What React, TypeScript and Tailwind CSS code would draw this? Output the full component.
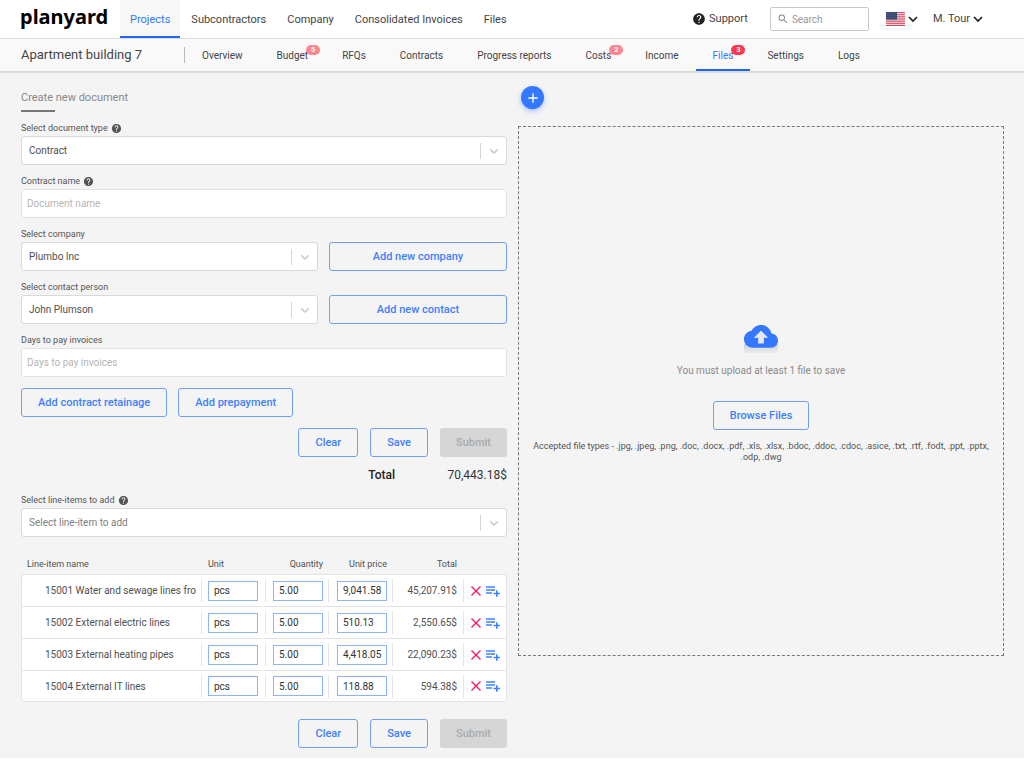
import { useState } from 'react';
import type { ReactNode } from 'react';
import { MdAdd, MdHelp, MdSearch } from 'react-icons/md';

const mainLinks = ['Projects', 'Subcontractors', 'Company', 'Consolidated Invoices', 'Files'];

const projectTabs = [
    { name: 'Overview' },
    { name: 'Budget', count: 5 },
    { name: 'RFQs' },
    { name: 'Contracts' },
    { name: 'Progress reports' },
    { name: 'Costs', count: 2 },
    { name: 'Income' },
    { name: 'Files', count: 3 },
    { name: 'Settings' },
    { name: 'Logs' },
];

const lineItems = [
    { name: '15001 Water and sewage lines from', unit: 'pcs', quantity: '5.00', price: '9,041.58', total: '45,207.91$' },
    { name: '15002 External electric lines', unit: 'pcs', quantity: '5.00', price: '510.13', total: '2,550.65$' },
    { name: '15003 External heating pipes', unit: 'pcs', quantity: '5.00', price: '4,418.05', total: '22,090.23$' },
    { name: '15004 External IT lines', unit: 'pcs', quantity: '5.00', price: '118.88', total: '594.38$' },
];

function Chevron({ className }: { className: string }) {
    return (
        <svg viewBox="0 0 20 20" fill="currentColor" className={className} aria-hidden="true">
            <path d="M4.516 7.548c0.436-0.446 1.043-0.481 1.576 0l3.908 3.747 3.908-3.747c0.533-0.481 1.141-0.446 1.574 0 0.436 0.445 0.408 1.197 0 1.615-0.406 0.418-4.695 4.502-4.695 4.502-0.217 0.223-0.502 0.335-0.787 0.335s-0.57-0.112-0.789-0.335c0 0-4.287-4.084-4.695-4.502s-0.436-1.17 0-1.615z" />
        </svg>
    );
}

function CaretDown() {
    return (
        <svg viewBox="0 0 10 10" fill="none" stroke="#222" strokeWidth="1.7" className="size-[10px]" aria-hidden="true">
            <path d="M1 3l4 4 4-4" />
        </svg>
    );
}

function Cross() {
    return (
        <svg viewBox="0 0 10 10" fill="none" stroke="#f5185c" strokeWidth="1.4" className="size-[10px]" aria-hidden="true">
            <path d="M0.5 0.5l9 9M9.5 0.5l-9 9" />
        </svg>
    );
}

function ListPlus() {
    return (
        <svg viewBox="0 0 16 12" fill="none" stroke="#4080ff" strokeWidth="1.6" className="h-3 w-4" aria-hidden="true">
            <path d="M1 2h9M1 5h9M1 8h6M8.5 8.5h6.5M11.8 5.2v6.6" />
        </svg>
    );
}

function Flag() {
    return (
        <svg viewBox="0 0 19 14" className="h-[14px] w-[19px]" aria-hidden="true">
            <rect width="19" height="14" fill="#f3e4e6" />
            {[0, 2, 4, 6, 8, 10, 12].map((y) => (
                <rect key={y} y={y * 1.077} width="19" height="1.077" fill="#d0475a" />
            ))}
            <rect width="11" height="7.5" fill="#3c4a78" />
            {[1.2, 3.2, 5.2].map((y) =>
                [1.2, 3.4, 5.6, 7.8].map((x) => <rect key={`${x}-${y}`} x={x} y={y} width="0.7" height="0.7" fill="#6f7ba3" />)
            )}
        </svg>
    );
}

function FieldLabel({ id, text, help }: { id: string; text: string; help?: boolean }) {
    return (
        <label htmlFor={id} className="flex h-4 items-center gap-[3px] pt-px text-[9px] text-[#555]">
            {text}
            {help && <MdHelp className="size-[11px] text-[#555]" />}
        </label>
    );
}

function SelectBox({ id, value, muted }: { id: string; value: string; muted?: boolean }) {
    return (
        <div className="relative">
            <select
                id={id}
                className={`block h-[29px] w-full appearance-none rounded-[3px] border border-[#d9d9d9] bg-white pr-8 pl-[7px] text-[10px] outline-none ${muted ? 'text-[#808080]' : 'text-[#505050]'}`}
            >
                <option>{value}</option>
            </select>
            <div className="pointer-events-none absolute inset-y-0 right-0 flex items-center text-[#ccc]">
                <span className="h-4 w-px bg-[#d5d5d5]" />
                <Chevron className="mx-[6px] size-[14px]" />
            </div>
        </div>
    );
}

function TextBox({ id, placeholder }: { id: string; placeholder: string }) {
    return (
        <input
            id={id}
            type="text"
            placeholder={placeholder}
            className="block h-[29px] w-full rounded-[3px] border border-[#e2e2e2] bg-white px-[5px] text-[10px] text-[#505050] outline-none placeholder:text-[#b5b5b5]"
        />
    );
}

function OutlineButton({ children }: { children: ReactNode }) {
    return (
        <button type="button" className="h-[29px] cursor-pointer rounded-[3px] border border-[#6f9ffb] px-4 pt-px text-[11px] font-medium text-[#4080ff]">
            {children}
        </button>
    );
}

function FormActions() {
    return (
        <div className="flex justify-end gap-3">
            <OutlineButton>Clear</OutlineButton>
            <OutlineButton>Save</OutlineButton>
            <button type="button" disabled className="h-[29px] rounded-[3px] bg-[#d6d6d6] px-4 pt-px text-[11px] font-medium text-[#aaa]">
                Submit
            </button>
        </div>
    );
}

function TopBar() {
    return (
        <header className="flex h-[39px] items-stretch border-b border-[#ddd] bg-white text-[11px] text-[#444]">
            <a href="#" className="flex w-[120px] shrink-0 items-center pb-1 pl-5 font-['Noto_Sans',sans-serif] text-[20px] leading-none font-bold text-black">
                planyard
            </a>
            <nav className="flex gap-px">
                {mainLinks.map((link) => (
                    <a
                        key={link}
                        href="#"
                        className={`flex items-center px-[10px] whitespace-nowrap ${link === 'Projects' ? 'border-b-2 border-[#2065f8] bg-[#f8f8f8] pt-1 text-[#3478ff]' : 'pt-0.5'}`}
                    >
                        {link}
                    </a>
                ))}
            </nav>
            <div className="ml-auto flex items-center pr-[41px]">
                <a href="#" className="flex items-center gap-[3px]">
                    <MdHelp className="size-[14px] text-[#222]" />
                    Support
                </a>
                <label className="ml-[22px] flex h-6 w-[99px] items-center gap-[3px] rounded-[2px] border border-[#c8c8c8] px-[6px]">
                    <MdSearch className="size-3 shrink-0 text-[#888]" />
                    <input type="search" aria-label="Search" placeholder="Search" className="w-full min-w-0 text-[10px] outline-none placeholder:text-[#999]" />
                </label>
                <button type="button" aria-label="Language" className="ml-[17px] flex items-center gap-[3px]">
                    <Flag />
                    <CaretDown />
                </button>
                <button type="button" className="ml-[15px] flex items-center gap-[3px]">
                    M. Tour
                    <CaretDown />
                </button>
            </div>
        </header>
    );
}

function ProjectBar() {
    return (
        <div className="flex h-[33px] items-stretch border-b border-[#d9d9d9] bg-[#f9f9f9] text-[#444] shadow-[0_1px_1px_#ddd]">
            <div className="flex w-[184px] shrink-0 items-center pl-[21px] text-[13px]">Apartment building 7</div>
            <span className="my-2 w-px bg-[#bbb]" />
            <nav className="flex text-[10px]">
                {projectTabs.map((tab) => (
                    <a
                        key={tab.name}
                        href="#"
                        className={`flex items-center px-[17px] whitespace-nowrap ${tab.name === 'Files' ? 'border-b-2 border-[#2065f8] pt-0.5 text-[#3478ff]' : ''}`}
                    >
                        <span className="relative">
                            {tab.name}
                            {tab.count && (
                                <span
                                    className={`absolute -top-[3px] left-full -ml-0.5 h-[10px] w-[14px] rounded-full text-center text-[7px] leading-[10px] font-bold text-white ${tab.name === 'Files' ? 'bg-[#ff3850]' : 'bg-[#ff8592]'}`}
                                >
                                    {tab.count}
                                </span>
                            )}
                        </span>
                    </a>
                ))}
            </nav>
        </div>
    );
}

function CellInput({ label, value }: { label: string; value: string }) {
    const [text, setText] = useState(value);
    return (
        <input
            aria-label={label}
            value={text}
            onChange={(e) => setText(e.target.value)}
            className="block h-5 w-[50px] border border-[#8fb3fb] bg-white pl-[5px] text-[10px] text-[#333] outline-none"
        />
    );
}

function LineItems() {
    const divided = 'flex h-[23px] items-center border-l border-[#e4e4e4]';
    return (
        <table className="mt-[15px] w-full table-fixed border-separate border-spacing-0 text-[#505050]">
            <thead>
                <tr className="h-[22px] text-[9px] [&>th]:p-0 [&>th]:pt-1 [&>th]:font-normal">
                    <th className="pl-[6px]! text-left">Line-item name</th>
                    <th className="w-16 pl-[7px]! text-left">Unit</th>
                    <th className="w-[63px] pr-[5px]! text-right">Quantity</th>
                    <th className="w-16 pr-[5px]! text-right">Unit price</th>
                    <th className="w-[71px] pr-[6px]! text-right">Total</th>
                    <th className="w-11" aria-label="Actions" />
                </tr>
            </thead>
            <tbody className="text-[10px] [&>tr:first-child>td:first-child]:rounded-tl-[4px] [&>tr:first-child>td:last-child]:rounded-tr-[4px] [&>tr:last-child>td]:border-b [&>tr:last-child>td:first-child]:rounded-bl-[4px] [&>tr:last-child>td:last-child]:rounded-br-[4px]">
                {lineItems.map((item) => (
                    <tr key={item.name} className="h-8 [&>td]:border-t [&>td]:border-[#e4e4e4] [&>td]:bg-white [&>td]:p-0 [&>td:first-child]:border-l [&>td:last-child]:border-r">
                        <td>
                            <div className="mr-[5px] ml-[23px] overflow-hidden whitespace-nowrap">{item.name}</div>
                        </td>
                        <td>
                            <div className={`${divided} pl-[6px]`}>
                                <CellInput label="Unit" value={item.unit} />
                            </div>
                        </td>
                        <td>
                            <div className={`${divided} justify-end pr-[5px]`}>
                                <CellInput label="Quantity" value={item.quantity} />
                            </div>
                        </td>
                        <td>
                            <div className={`${divided} justify-end pr-[5px]`}>
                                <CellInput label="Unit price" value={item.price} />
                            </div>
                        </td>
                        <td>
                            <div className={`${divided} justify-end pr-[6px]`}>{item.total}</div>
                        </td>
                        <td>
                            <div className={`${divided} gap-1 pl-[7px]`}>
                                <button type="button" aria-label="Remove line-item">
                                    <Cross />
                                </button>
                                <button type="button" aria-label="Add to list">
                                    <ListPlus />
                                </button>
                            </div>
                        </td>
                    </tr>
                ))}
            </tbody>
        </table>
    );
}

function DocumentForm() {
    return (
        <form className="pt-4">
            <h1 className="h-[22px] pt-px text-[11px] leading-[18px] text-[#888]">Create new document</h1>
            <div className="h-0.5 w-[34px] bg-[#777]" />

            <div className="mt-2 space-y-2">
                <div>
                    <FieldLabel id="doc-type" text="Select document type" help />
                    <SelectBox id="doc-type" value="Contract" />
                </div>
                <div>
                    <FieldLabel id="doc-name" text="Contract name" help />
                    <TextBox id="doc-name" placeholder="Document name" />
                </div>
                <div>
                    <FieldLabel id="company" text="Select company" />
                    <div className="grid grid-cols-[5fr_3fr] gap-[11px]">
                        <SelectBox id="company" value="Plumbo Inc" />
                        <OutlineButton>Add new company</OutlineButton>
                    </div>
                </div>
                <div>
                    <FieldLabel id="contact" text="Select contact person" />
                    <div className="grid grid-cols-[5fr_3fr] gap-[11px]">
                        <SelectBox id="contact" value="John Plumson" />
                        <OutlineButton>Add new contact</OutlineButton>
                    </div>
                </div>
                <div>
                    <FieldLabel id="days" text="Days to pay invoices" />
                    <TextBox id="days" placeholder="Days to pay invoices" />
                </div>
            </div>

            <div className="my-[11px] flex gap-[11px]">
                <OutlineButton>Add contract retainage</OutlineButton>
                <OutlineButton>Add prepayment</OutlineButton>
            </div>
            <FormActions />

            <div className="flex h-[35px] items-center justify-end text-[12px] text-[#333]">
                <span className="font-medium text-[#222]">Total</span>
                <span className="w-28 text-right">70,443.18$</span>
            </div>

            <FieldLabel id="line-item" text="Select line-items to add" help />
            <SelectBox id="line-item" value="Select line-item to add" muted />
            <LineItems />
            <div className="mt-[17px]">
                <FormActions />
            </div>
        </form>
    );
}

function UploadPanel() {
    return (
        <section className="pt-[14px]">
            <button type="button" aria-label="Add file" className="ml-[3px] flex size-[23px] items-center justify-center rounded-full bg-[#3378ff] text-white shadow-[0_2px_5px_rgba(51,120,255,0.4)]">
                <MdAdd className="size-4" />
            </button>
            <div className="mt-[17px] flex min-h-[530px] flex-col items-center justify-center border border-dashed border-[#777] px-3 pt-[6px] text-center">
                <svg viewBox="0 0 34 28" className="h-7 w-[34px]" aria-hidden="true">
                    <defs>
                        <linearGradient id="cloud-shade" x1="0" y1="0" x2="0" y2="1">
                            <stop offset="0" stopColor="#d2d2d2" />
                            <stop offset="1" stopColor="#ececec" />
                        </linearGradient>
                    </defs>
                    <rect y="19" width="34" height="9" fill="url(#cloud-shade)" />
                    <path d="M12 8h10v11H12z" fill="#e8e8e8" />
                    <path
                        transform="scale(1.4167) translate(0 -4)"
                        fill="#3378ff"
                        d="M19.35 10.04C18.67 6.59 15.64 4 12 4 9.11 4 6.6 5.64 5.35 8.04 2.34 8.36 0 10.91 0 14c0 3.31 2.69 6 6 6h13c2.76 0 5-2.24 5-5 0-2.64-2.05-4.78-4.65-4.96zM14 13v4h-4v-4H7l5-5 5 5h-3z"
                    />
                </svg>
                <p className="mt-[9px] text-[10px] leading-[18px] text-[#8a8a8a]">You must upload at least 1 file to save</p>
                <div className="mt-[21px] mb-[11px]">
                    <OutlineButton>Browse Files</OutlineButton>
                </div>
                <p className="text-[9px] leading-[11px] text-[#555]">
                    Accepted file types - .jpg, .jpeg, .png, .doc, .docx, .pdf, .xls, .xlsx, .bdoc, .ddoc, .cdoc, .asice, .txt, .rtf, .fodt, .ppt, .pptx, .odp, .dwg
                </p>
            </div>
        </section>
    );
}

export default function App() {
    return (
        <div className="bg-[#f4f4f4] font-[Roboto,sans-serif]">
            <TopBar />
            <ProjectBar />
            <main className="grid grid-cols-2 gap-[11px] pr-5 pb-[10px] pl-[21px]">
                <DocumentForm />
                <UploadPanel />
            </main>
        </div>
    );
}
